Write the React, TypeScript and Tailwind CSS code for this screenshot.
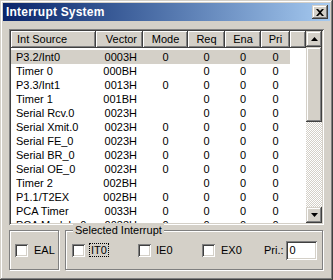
import React from 'react';

const raised = 'shadow-[inset_-1px_-1px_#404040,inset_1px_1px_#d4d0c8,inset_-2px_-2px_#808080,inset_2px_2px_#ffffff]';
const headRaised = 'shadow-[inset_-1px_-1px_#404040,inset_1px_1px_#ffffff,inset_-2px_-2px_#808080]';
const sunken = 'shadow-[inset_1px_1px_#808080,inset_-1px_-1px_#ffffff,inset_2px_2px_#404040,inset_-2px_-2px_#d4d0c8]';
const etched = 'border border-[#808080] shadow-[inset_1px_1px_#ffffff,1px_1px_#ffffff]';

const cols = [
    { name: 'Int Source', w: 'w-[85px]', head: 'justify-start pl-[6px]', cell: 'justify-start pl-[5px]' },
    { name: 'Vector', w: 'w-[47px]', head: 'justify-end pr-[6px]', cell: 'justify-end pr-[6px]' },
    { name: 'Mode', w: 'w-[45px]', head: 'justify-center', cell: 'justify-center' },
    { name: 'Req', w: 'w-[37px]', head: 'justify-center', cell: 'justify-center' },
    { name: 'Ena', w: 'w-[36px]', head: 'justify-center', cell: 'justify-center' },
    { name: 'Pri', w: 'w-[29px]', head: 'justify-center', cell: 'justify-center' },
];

const rows = [
    ['P3.2/Int0', '0003H', '0', '0', '0', '0'],
    ['Timer 0', '000BH', '', '0', '0', '0'],
    ['P3.3/Int1', '0013H', '0', '0', '0', '0'],
    ['Timer 1', '001BH', '', '0', '0', '0'],
    ['Serial Rcv.0', '0023H', '', '0', '0', '0'],
    ['Serial Xmit.0', '0023H', '0', '0', '0', '0'],
    ['Serial FE_0', '0023H', '0', '0', '0', '0'],
    ['Serial BR_0', '0023H', '0', '0', '0', '0'],
    ['Serial OE_0', '0023H', '0', '0', '0', '0'],
    ['Timer 2', '002BH', '', '0', '0', '0'],
    ['P1.1/T2EX', '002BH', '0', '0', '0', '0'],
    ['PCA Timer', '0033H', '0', '0', '0', '0'],
    ['PCA Module 0', '0033H', '0', '0', '0', '0'],
];

const CheckBox: React.FC = () => (
    <div className={`w-[13px] h-[13px] bg-white shrink-0 ${sunken}`} />
);

const Arrow: React.FC<{ up?: boolean }> = ({ up }) => (
    <div className={`w-[16px] h-[16px] bg-[#d4d0c8] flex items-center justify-center shrink-0 ${raised}`}>
        <svg width="7" height="4" viewBox="0 0 7 4">
            {up ? <path d="M3.5 0 L7 4 L0 4 Z" fill="#000" /> : <path d="M0 0 L7 0 L3.5 4 Z" fill="#000" />}
        </svg>
    </div>
);

const App: React.FC = () => {
    return (
        <div
            className={`w-[333px] h-[280px] bg-[#d4d0c8] p-[3px] flex flex-col text-[11px] text-black shadow-[inset_-1px_-1px_#404040,inset_1px_1px_#d4d0c8,inset_-2px_-2px_#808080,inset_2px_2px_#ffffff]`}
            style={{ fontFamily: '"Liberation Sans", Arial, sans-serif' }}
        >
            {/* title bar */}
            <div className="h-[18px] flex items-center justify-between pl-[3px] pr-[2px] bg-gradient-to-r from-[#0a246a] to-[#a6caf0]">
                <span className="text-white font-bold text-[12px] tracking-[0.2px] leading-none">Interrupt System</span>
                <div className={`w-[16px] h-[14px] bg-[#d4d0c8] flex items-center justify-center ${raised}`}>
                    <svg width="8" height="7" viewBox="0 0 8 7">
                        <path d="M0 0 H2 L4 2 L6 0 H8 L5 3.5 L8 7 H6 L4 5 L2 7 H0 L3 3.5 Z" fill="#000" />
                    </svg>
                </div>
            </div>

            <div className="flex-1 flex flex-col px-[6px] pt-[8px]">
                {/* list view */}
                <div className={`h-[196px] bg-white p-[2px] flex ${sunken}`}>
                    <div className="flex-1 flex flex-col overflow-hidden">
                        <div className="flex h-[17px] shrink-0 bg-[#d4d0c8]">
                            {cols.map(c => (
                                <div key={c.name} className={`${c.w} h-full flex items-center ${c.head} ${headRaised}`}>
                                    {c.name}
                                </div>
                            ))}
                            <div className={`flex-1 h-full ${headRaised}`} />
                        </div>
                        <div className="flex flex-col pt-[2px]">
                            {rows.map((r, i) => (
                                <div key={i} className="flex h-[14px] shrink-0">
                                    {r.map((v, j) => (
                                        <div
                                            key={j}
                                            className={`${cols[j].w} h-full flex items-center ${cols[j].cell} ${i === 0 ? 'bg-[#d4d0c8]' : ''}`}
                                        >
                                            {v}
                                        </div>
                                    ))}
                                </div>
                            ))}
                        </div>
                    </div>
                    {/* scrollbar */}
                    <div className="w-[16px] flex flex-col">
                        <Arrow up />
                        <div className={`h-[75px] bg-[#d4d0c8] shrink-0 ${raised}`} />
                        <div className="flex-1 bg-[repeating-conic-gradient(#d4d0c8_0_25%,#ffffff_0_50%)] bg-[length:2px_2px]" />
                        <Arrow />
                    </div>
                </div>

                {/* bottom group boxes */}
                <div className="flex gap-[6px] mt-[5px]">
                    <div className={`w-[50px] h-[40px] flex items-center pl-[5px] ${etched}`}>
                        <CheckBox />
                        <span className="ml-[6px]">EAL</span>
                    </div>
                    <div className={`relative w-[258px] h-[40px] flex items-center pl-[6px] ${etched}`}>
                        <span className="absolute left-[7px] top-[-7px] px-[2px] bg-[#d4d0c8] leading-[12px]">Selected Interrupt</span>
                        <div className="w-[66px] flex items-center">
                            <CheckBox />
                            <span className="ml-[4px] px-[1px] border border-dotted border-black leading-[12px]">IT0</span>
                        </div>
                        <div className="w-[64px] flex items-center">
                            <CheckBox />
                            <span className="ml-[5px]">IE0</span>
                        </div>
                        <div className="w-[62px] flex items-center">
                            <CheckBox />
                            <span className="ml-[6px]">EX0</span>
                        </div>
                        <span>Pri.:</span>
                        <div className={`ml-[2px] w-[31px] h-[19px] bg-white flex items-center pl-[4px] ${sunken}`}>0</div>
                    </div>
                </div>
            </div>
        </div>
    );
};

export default App;
